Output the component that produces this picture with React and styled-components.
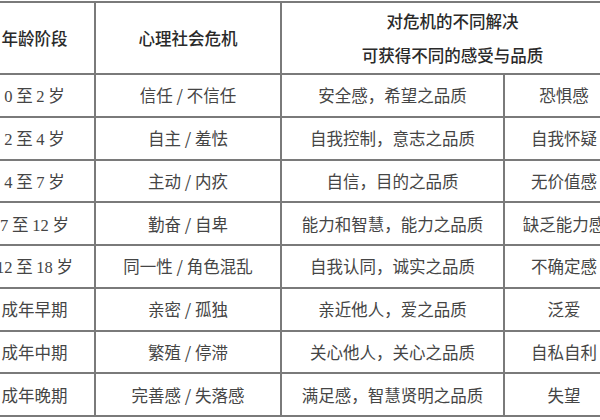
import React from "react";
import styled, { createGlobalStyle } from "styled-components";

const Global = createGlobalStyle`
  html, body { margin: 0; padding: 0; background: #fff; overflow: hidden; }
  body { width: 600px; height: 420px; }
`;

const Page = styled.div`
  width: 600px;
  height: 420px;
  overflow: hidden;
  background: #fff;
`;

const Table = styled.div`
  display: grid;
  grid-template-columns: 119px 184px 221px 118px;
  grid-template-rows: 70px repeat(8, 1fr);
  gap: 2px;
  padding: 2px;
  height: 416px;
  box-sizing: border-box;
  width: max-content;
  margin: 1px 0 0 -27px;
  background: #7a7a7a;
`;

const Cell = styled.div`
  background: #fff;
  display: flex;
  align-items: center;
  justify-content: center;
  text-align: center;
  white-space: nowrap;
  font-family: "Liberation Serif", "Noto Sans CJK SC", serif;
  font-size: 16.5px;
  color: ${(p) => (p.$head ? "#2a2a2a" : "#454545")};
  font-weight: ${(p) => (p.$head ? 500 : 400)};
  grid-column: ${(p) => (p.$span ? `span ${p.$span}` : "auto")};
  flex-direction: column;
  line-height: ${(p) => (p.$head ? "34px" : "normal")};
`;

const CjkText = styled.span`
  font-family: "Noto Sans CJK SC", sans-serif;
`;

const rows = [
  ["0 至 2 岁", "信任 / 不信任", "安全感，希望之品质", "恐惧感"],
  ["2 至 4 岁", "自主 / 羞怯", "自我控制，意志之品质", "自我怀疑"],
  ["4 至 7 岁", "主动 / 内疚", "自信，目的之品质", "无价值感"],
  ["7 至 12 岁", "勤奋 / 自卑", "能力和智慧，能力之品质", "缺乏能力感"],
  ["12 至 18 岁", "同一性 / 角色混乱", "自我认同，诚实之品质", "不确定感"],
  ["成年早期", "亲密 / 孤独", "亲近他人，爱之品质", "泛爱"],
  ["成年中期", "繁殖 / 停滞", "关心他人，关心之品质", "自私自利"],
  ["成年晚期", "完善感 / 失落感", "满足感，智慧贤明之品质", "失望"],
];

const Age = ({ text }) => {
  const parts = text.split(/(\d+)/).filter(Boolean);
  return (
    <span>
      {parts.map((p, i) =>
        /\d/.test(p) ? <span key={i}>{p}</span> : <CjkText key={i}>{p}</CjkText>
      )}
    </span>
  );
};

export default function App() {
  return (
    <Page>
      <Global />
      <Table>
        <Cell $head><CjkText>年龄阶段</CjkText></Cell>
        <Cell $head><CjkText>心理社会危机</CjkText></Cell>
        <Cell $head $span={2}>
          <CjkText>对危机的不同解决</CjkText>
          <CjkText>可获得不同的感受与品质</CjkText>
        </Cell>
        {rows.map((r, i) => (
          <React.Fragment key={i}>
            <Cell><Age text={r[0]} /></Cell>
            <Cell><CjkText>{r[1]}</CjkText></Cell>
            <Cell><CjkText>{r[2]}</CjkText></Cell>
            <Cell><CjkText>{r[3]}</CjkText></Cell>
          </React.Fragment>
        ))}
      </Table>
    </Page>
  );
}
